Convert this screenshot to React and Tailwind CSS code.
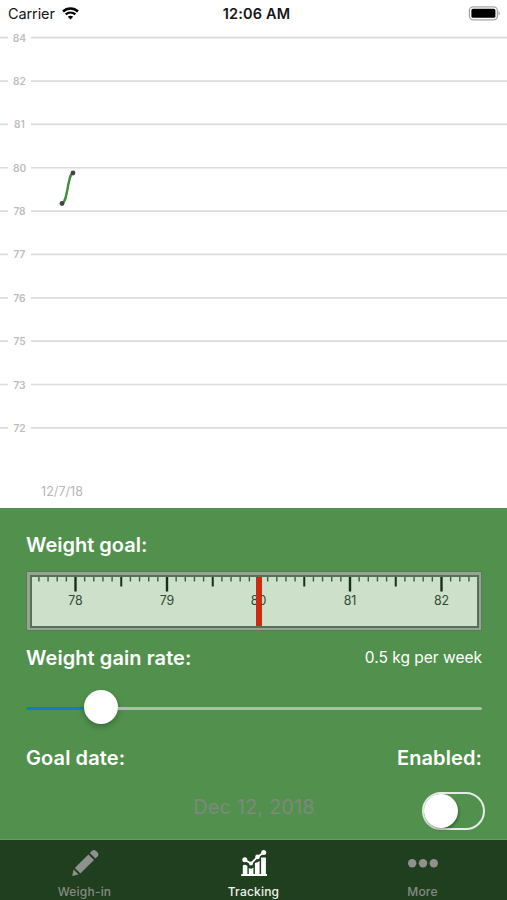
const GRID_VALUES = [84, 82, 81, 80, 78, 77, 76, 75, 73, 72]

const FIRST_LINE = 9.7
const LINE_GAP = 43.35

const RULER_CENTER = 226.5
const UNIT = 91.5

const StatusBar = () => (
  <header className="grid h-7 grid-cols-3 items-center pl-2 pr-[7px] text-[14.5px] leading-7 text-[#161616]">
    <div className="flex items-center gap-[7px]">
      <span className="tracking-[-0.1px]">Carrier</span>
      <svg width="17" height="13" viewBox="0 0 17 13" fill="none" stroke="#000" className="-mt-[2px]">
        <path d="M1 4.5C5.2.5 11.8.5 16 4.5" strokeWidth="2.5" />
        <path d="M3.7 7.4C6.5 4.9 10.5 4.9 13.3 7.4" strokeWidth="2.3" />
        <path d="M8.5 12.6 5.8 9.8C7.3 8.4 9.7 8.4 11.2 9.8Z" fill="#000" stroke="none" />
      </svg>
    </div>
    <span className="pl-[5px] text-center font-semibold tracking-[0.15px] whitespace-nowrap">12:06 AM</span>
    <svg width="32" height="15" viewBox="0 0 32 15" className="-mt-px justify-self-end">
      <rect x="1.4" y="0.8" width="28" height="13" rx="3.8" fill="#fff" stroke="#a6a6a6" strokeWidth="1.3" />
      <rect x="3.4" y="2.8" width="24" height="9" rx="1.6" fill="#000" />
      <path d="M30.7 5.2c1.3.5 1.3 3.7 0 4.2z" fill="#8a8a8a" />
    </svg>
  </header>
)

const WeightChart = () => (
  <svg width="507" height="480" viewBox="0 0 507 480" className="block">
    {GRID_VALUES.map((value, i) => {
      const y = FIRST_LINE + i * LINE_GAP
      return (
        <g key={value}>
          <path d={`M0 ${y}H8M31 ${y}H507`} stroke="#dcdcdc" strokeWidth="1.7" />
          <text x="19.5" y={y + 4} textAnchor="middle" fontSize="10.2" fontWeight="600" fill="#bdbdbd">{value}</text>
        </g>
      )
    })}
    <path d="M62 175.5C68 174 67.5 146 73 145" fill="none" stroke="#3f8f3c" strokeWidth="2.4" />
    <circle cx="62" cy="175.5" r="2.4" fill="#444" />
    <circle cx="73" cy="145" r="2.4" fill="#444" />
    <text x="41" y="467.6" fontSize="12.5" textLength="42" fill="#b8b8b8">12/7/18</text>
  </svg>
)

const Ruler = () => {
  const ticks = []
  for (let i = -24; i <= 23; i++) {
    const major = i % 10 === 0
    const half = i % 5 === 0
    ticks.push(
      <path
        key={i}
        d={`M${RULER_CENTER + (i * UNIT) / 10} 0V${major ? 14.5 : half ? 9.5 : 4.5}`}
        stroke={half ? '#173018' : '#3f5b40'}
        strokeWidth={major ? 2.4 : half ? 2 : 1.4}
      />
    )
  }
  return (
    <div className="h-[60px] border border-[#5d785c] bg-[#93a690] p-[2.5px]">
      <div className="h-full overflow-hidden border-2 border-[#56705a] bg-[#cce0ca]">
        <svg width="446" height="50" viewBox="0 0 446 50" className="block">
          {ticks}
          {[78, 79, 80, 81, 82].map((v) => (
            <text key={v} x={RULER_CENTER + (v - 80) * UNIT} y="28.4" textAnchor="middle" fontSize="12.4" fill="#334a35">{v}</text>
          ))}
          <rect x={RULER_CENTER - 2.5} y="0" width="6" height="50" fill="#cb2a13" />
        </svg>
      </div>
    </div>
  )
}

const Slider = () => (
  <div className="flex h-[34px] items-center">
    <div className="mt-[3px] h-[3px] w-[57.5px] rounded-l-full bg-[#127bd0]" />
    <div className="size-[34px] rounded-full bg-white shadow-[0_3px_6px_rgba(0,0,0,0.25)]" />
    <div className="mt-[3px] h-[3px] flex-1 rounded-r-full bg-[#b5b9b4]" />
  </div>
)

const Toggle = () => (
  <div className="h-[38px] w-[63px] rounded-full border-2 border-[#e6ebe5]">
    <div className="size-[34px] rounded-full bg-white shadow-[1px_2px_3px_rgba(0,0,0,0.3)]" />
  </div>
)

const PencilIcon = () => (
  <svg width="28" height="28" viewBox="0 0 28 28" fill="#8e918d">
    <path d="M1.2 27 2.6 20.6 7.6 25.6Z" />
    <path d="M3.8 19 17.4 5.4 23 11 9.4 24.6Z" />
    <path d="M18.8 4 21 1.8Q22.9.1 24.8 1.8L26.6 3.6Q28.2 5.5 26.6 7.4L24.4 9.6Z" />
  </svg>
)

const ChartIcon = () => (
  <svg width="28" height="28" viewBox="0 0 28 28" fill="#fff">
    <path d="M1.2 25H27V27H1.2z" />
    <path d="M2.8 16.4Q5 15 7.4 16.9V25.5H2.8zM8.8 19Q11 20.6 13.4 18.4V25.5H8.8zM14.9 14Q17.5 13.6 19.6 12V25.5H14.9zM21.1 8.6H25.9V25.5H21.1z" />
    <path d="M4.8 10.8 11 14.6 17.5 7.9 23.7 3.4" fill="none" stroke="#fff" strokeWidth="1.9" />
    <circle cx="4.8" cy="10.8" r="2.5" />
    <circle cx="11" cy="14.4" r="2" />
    <circle cx="17.5" cy="7.9" r="2.3" />
    <circle cx="23.7" cy="3.4" r="2.5" />
  </svg>
)

const MoreIcon = () => (
  <svg width="30" height="28" viewBox="0 0 30 28" fill="#8e918d">
    <circle cx="4.2" cy="14.3" r="4.2" />
    <circle cx="15" cy="14.3" r="4.2" />
    <circle cx="25.8" cy="14.3" r="4.2" />
  </svg>
)

const TABS = [
  { label: 'Weigh-in', Icon: PencilIcon, color: 'text-[#858b84]' },
  { label: 'Tracking', Icon: ChartIcon, color: 'text-[#eef3ed]' },
  { label: 'More', Icon: MoreIcon, color: 'text-[#858b84]' },
]

const App = () => {
  return (
    <div className="flex h-[900px] w-[507px] flex-col overflow-hidden bg-white font-['Inter','Liberation_Sans',sans-serif]">
      <StatusBar />
      <WeightChart />

      <main className="flex h-[332px] flex-col border-b border-[#6a9b66] bg-[#51914d] pr-[25px] pl-[26px] pt-[22px] text-white">
        <h2 className="h-[30px] text-[20px] leading-[30px] font-semibold">Weight goal:</h2>
        <div className="mt-[11px]">
          <Ruler />
        </div>

        <div className="mt-3 flex h-[30px] items-center justify-between">
          <h2 className="text-[20px] font-semibold tracking-[0.08px]">Weight gain rate:</h2>
          <span className="text-[15.5px]">0.5 kg per week</span>
        </div>
        <div className="mt-[17px]">
          <Slider />
        </div>

        <div className="mt-[19px] flex h-[30px] items-center justify-between text-[20px] font-semibold tracking-[0.1px]">
          <h2>Goal date:</h2>
          <h2>Enabled:</h2>
        </div>
        <div className="mt-[19px] -mr-[3px] grid h-[38px] grid-cols-[1fr_auto_1fr] items-center">
          <span />
          <span className="-mt-[8px] -ml-[3px] text-[20px] tracking-[0.1px] text-[#7e897b]">Dec 12, 2018</span>
          <div className="justify-self-end">
            <Toggle />
          </div>
        </div>
      </main>

      <nav className="grid h-[60px] grid-cols-3 bg-[#203f1e]">
        {TABS.map(({ label, Icon, color }) => (
          <button key={label} className={`flex flex-col items-center pt-[9px] text-[12px] font-medium ${color}`}>
            <Icon />
            <span className="mt-[6px] leading-[18px] tracking-[0.2px]">{label}</span>
          </button>
        ))}
      </nav>
    </div>
  )
}

export default App
